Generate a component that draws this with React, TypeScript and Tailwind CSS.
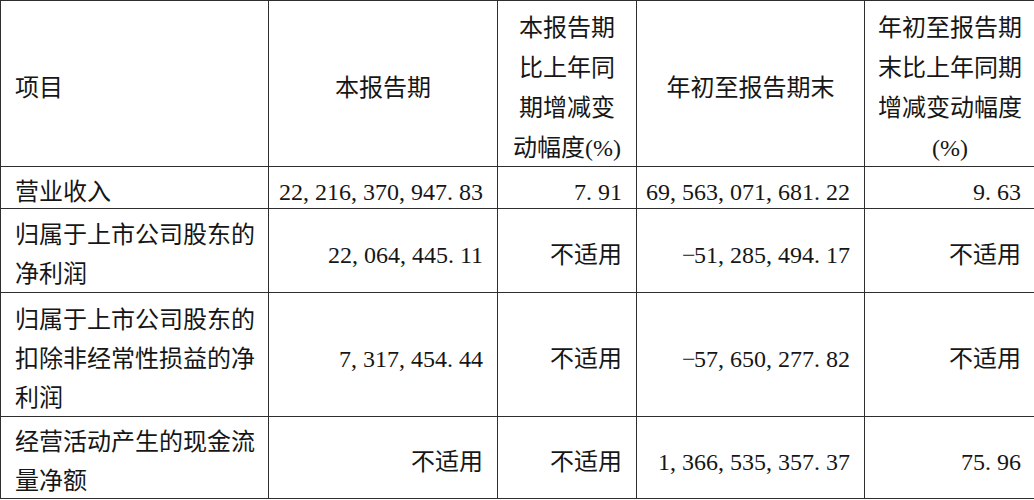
import React from "react";

const FONT = "font-['Liberation_Serif','Noto_Sans_CJK_SC',serif]";

function Num({ v }: { v: string }) {
  return (
    <span className="whitespace-nowrap">
      {v.split("").map((c, i) =>
        c === "," || c === "." ? (
          <span key={i} className="inline-block w-[0.5em] text-left">
            {c}
          </span>
        ) : c === "−" ? (
          <span key={i} className="inline-block w-[0.5em] text-center">
            {c}
          </span>
        ) : (
          <React.Fragment key={i}>{c}</React.Fragment>
        )
      )}
    </span>
  );
}

type Align = "left" | "center" | "right";

function Cell({
  children,
  align = "left",
  header = false,
}: {
  children: React.ReactNode;
  align?: Align;
  header?: boolean;
}) {
  const justify =
    align === "left" ? "justify-start text-left" : align === "center" ? "justify-center text-center" : "justify-end text-right";
  return (
    <div
      className={`flex items-center border-r border-b border-[#2e2e2e] px-[14px] pt-[9px] ${justify} ${
        header ? "leading-[40px]" : "leading-[39px]"
      }`}
    >
      <div>{children}</div>
    </div>
  );
}

const rows: { label: string[]; c2: string; c3: string; c4: string; c5: string }[] = [
  { label: ["营业收入"], c2: "22,216,370,947.83", c3: "7.91", c4: "69,563,071,681.22", c5: "9.63" },
  { label: ["归属于上市公司股东的", "净利润"], c2: "22,064,445.11", c3: "不适用", c4: "−51,285,494.17", c5: "不适用" },
  {
    label: ["归属于上市公司股东的", "扣除非经常性损益的净", "利润"],
    c2: "7,317,454.44",
    c3: "不适用",
    c4: "−57,650,277.82",
    c5: "不适用",
  },
  { label: ["经营活动产生的现金流", "量净额"], c2: "不适用", c3: "不适用", c4: "1,366,535,357.37", c5: "75.96" },
];

function Val({ v }: { v: string }) {
  return /[0-9]/.test(v) ? <Num v={v} /> : <span>{v}</span>;
}

function Lines({ lines }: { lines: string[] }) {
  return (
    <>
      {lines.map((l, i) => (
        <div key={i} className="whitespace-nowrap">
          {l}
        </div>
      ))}
    </>
  );
}

export default function App() {
  return (
    <div className="w-[1034px] h-[500px] overflow-hidden bg-white">
      <div
        className={`${FONT} text-[24px] text-[#161616] grid w-[1036px] grid-cols-[268px_229px_139px_228px_171px] grid-rows-[166px_42px_84px_124px_82px] border-t border-l border-[#2e2e2e]`}
      >
        <Cell header>项目</Cell>
        <Cell header align="center">
          本报告期
        </Cell>
        <Cell header align="center">
          <Lines lines={["本报告期", "比上年同", "期增减变", "动幅度(%)"]} />
        </Cell>
        <Cell header align="center">
          年初至报告期末
        </Cell>
        <Cell header align="center">
          <Lines lines={["年初至报告期", "末比上年同期", "增减变动幅度", "(%)"]} />
        </Cell>

        {rows.map((r, i) => (
          <React.Fragment key={i}>
            <Cell>
              <Lines lines={r.label} />
            </Cell>
            <Cell align="right">
              <Val v={r.c2} />
            </Cell>
            <Cell align="right">
              <Val v={r.c3} />
            </Cell>
            <Cell align="right">
              <Val v={r.c4} />
            </Cell>
            <Cell align="right">
              <Val v={r.c5} />
            </Cell>
          </React.Fragment>
        ))}
      </div>
    </div>
  );
}
